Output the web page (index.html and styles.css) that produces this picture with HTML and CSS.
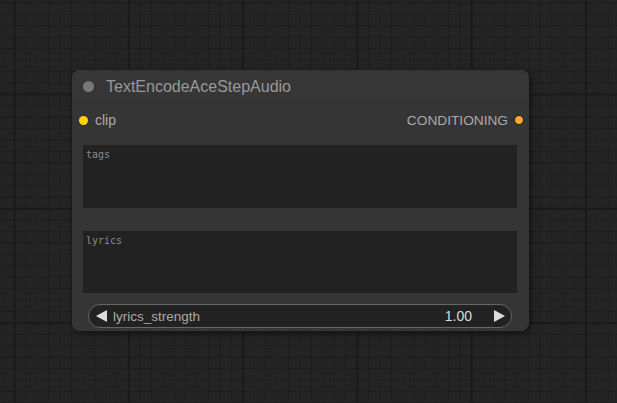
FILE: index.html
```html
<!DOCTYPE html>
<html>
<head>
<meta charset="utf-8">
<link rel="stylesheet" href="styles.css">
</head>
<body>
<div class="canvas">
  <div class="node">
    <div class="title">
      <span class="title-dot"></span>
      <span class="title-text">TextEncodeAceStepAudio</span>
    </div>
    <div class="body">
      <div class="slots">
        <div class="slot-in"><span class="dot-in"></span><span>clip</span></div>
        <div class="slot-out"><span>CONDITIONING</span><span class="dot-out"></span></div>
      </div>
      <div class="textbox tb-tags">tags</div>
      <div class="textbox tb-lyrics">lyrics</div>
      <div class="slider">
        <svg class="arrow" width="12" height="12" viewBox="0 0 12 12"><polygon points="11,0 11,12 0,6" fill="#dddddd"/></svg>
        <span class="s-label">lyrics_strength</span>
        <span class="s-value">1.00</span>
        <svg class="arrow" width="12" height="12" viewBox="0 0 12 12"><polygon points="1,0 1,12 12,6" fill="#dddddd"/></svg>
      </div>
    </div>
  </div>
</div>
</body>
</html>
```
FILE: styles.css
```css
html, body {
  margin: 0;
  padding: 0;
}
body {
  width: 617px;
  height: 403px;
  overflow: hidden;
  font-family: "Liberation Sans", Arial, sans-serif;
}
.canvas {
  position: relative;
  width: 617px;
  height: 403px;
  background-color: #242424;
  background-image:
    linear-gradient(to right, #1a1a1a 2px, transparent 2px),
    linear-gradient(to bottom, #1a1a1a 2px, transparent 2px),
    linear-gradient(to right, #1e1e1e 1px, transparent 1px),
    linear-gradient(to bottom, #1e1e1e 1px, transparent 1px);
  background-size: 114.3px 114.3px, 114.3px 114.3px, 11.43px 11.43px, 11.43px 11.43px;
  background-position: 13.5px 93.5px, 13.5px 93.5px, 2.5px 2.5px, 2.5px 2.5px;
}
.node {
  position: absolute;
  left: 72px;
  top: 70px;
  width: 457px;
  height: 261px;
  border-radius: 8px;
  background: #353535;
  box-shadow: 2px 2px 6px rgba(0,0,0,0.5);
  display: flex;
  flex-direction: column;
  overflow: hidden;
}
.title {
  height: 33px;
  box-sizing: border-box;
  display: flex;
  align-items: center;
  padding-left: 11px;
  background: #363636;
  border-bottom: 1px solid #303030;
}
.title-dot {
  width: 11px;
  height: 11px;
  border-radius: 50%;
  background: #777;
  margin-right: 12px;
  margin-top: 1px;
}
.title-text {
  color: #999;
  font-size: 16px;
  margin-top: 1px;
}
.body {
  flex: 1;
  display: flex;
  flex-direction: column;
  background: #353535;
}
.slots {
  height: 34px;
  display: flex;
  justify-content: space-between;
  align-items: center;
  font-size: 14px;
  color: #aaa;
}
.slot-in {
  display: flex;
  align-items: center;
  padding-left: 7px;
}
.dot-in {
  width: 9px;
  height: 9px;
  border-radius: 50%;
  background: #ffd500;
  margin-right: 7px;
}
.slot-out {
  display: flex;
  align-items: center;
  padding-right: 5px;
  font-size: 13.7px;
}
.dot-out {
  width: 8px;
  height: 8px;
  border-radius: 50%;
  background: #ffa931;
  border: 1px solid #1a1a1a;
  margin-left: 6px;
}
.textbox {
  margin: 0 12px 0 11px;
  background: #222;
  font-family: "DejaVu Sans Mono", "Liberation Mono", monospace;
  font-size: 10px;
  color: #868b91;
  padding: 4px 3px;
  box-sizing: border-box;
}
.tb-tags {
  margin-top: 8px;
  height: 63px;
}
.tb-lyrics {
  margin-top: 23px;
  height: 62px;
}
.slider {
  margin: 11px 17px 0 16px;
  height: 24px;
  box-sizing: border-box;
  border: 1px solid #666;
  border-radius: 12px;
  background: #222;
  display: flex;
  align-items: center;
  padding: 0 6px 0 7px;
  font-size: 14px;
}
.s-label {
  color: #aaa;
  margin-left: 5px;
  flex: 1;
  font-size: 13.5px;
}
.s-value {
  color: #ddd;
  margin-right: 21px;
}
```
